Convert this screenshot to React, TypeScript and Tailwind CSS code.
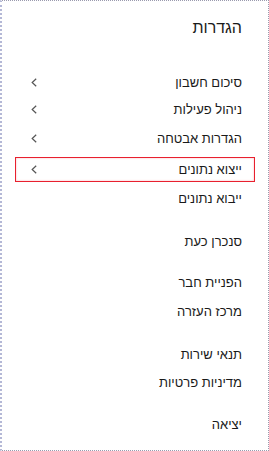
type Item = { label: string; top: string; chevron?: boolean; active?: boolean };

const ITEMS: Item[] = [
  { label: 'סיכום חשבון', top: 'mt-[32px]', chevron: true },
  { label: 'ניהול פעילות', top: 'mt-[2px]', chevron: true },
  { label: 'הגדרות אבטחה', top: 'mt-[4px]', chevron: true },
  { label: 'ייצוא נתונים', top: 'mt-[6px]', chevron: true, active: true },
  { label: 'ייבוא נתונים', top: 'mt-[4px]' },
  { label: 'סנכרן כעת', top: 'mt-[18px]' },
  { label: 'הפניית חבר', top: 'mt-[16px]' },
  { label: 'מרכז העזרה', top: 'mt-[4px]' },
  { label: 'תנאי שירות', top: 'mt-[18px]' },
  { label: 'מדיניות פרטיות', top: 'mt-[3px]' },
  { label: 'יציאה', top: 'mt-[17px]' },
];

function Chevron() {
  return (
    <svg width="6" height="9" viewBox="0 0 6 9" fill="none" stroke="#555" strokeWidth="1.2">
      <path d="M5.2 0.8 L1.2 4.5 L5.2 8.2" />
    </svg>
  );
}

export default function App() {
  return (
    <div
      dir="rtl"
      className="w-[269px] h-[451px] bg-white border border-dotted border-[#9a9aae] border-l-2 border-l-[#b4b8d6] overflow-hidden"
      style={{ fontFamily: '"Liberation Sans", "DejaVu Sans", sans-serif' }}
    >
      <div className="pr-[26px] pt-[17px] pl-[13px]">
        <h1 className="text-[16px] leading-[20px] text-[#1a1a1a] font-normal">הגדרות</h1>
        <div className="flex flex-col">
          {ITEMS.map(item => (
            <div
              key={item.label}
              className={`${item.top} h-[25px] flex items-center justify-between -mr-[13px] pr-[12px] pl-[15px] ${item.active ? 'border border-[#e8202e] shadow-[inset_0_0_2px_rgba(232,32,46,0.35)]' : 'border border-transparent'}`}
            >
              <span className="text-[13px] text-[#1a1a1a]">{item.label}</span>
              {item.chevron && <Chevron />}
            </div>
          ))}
        </div>
      </div>
    </div>
  );
}
